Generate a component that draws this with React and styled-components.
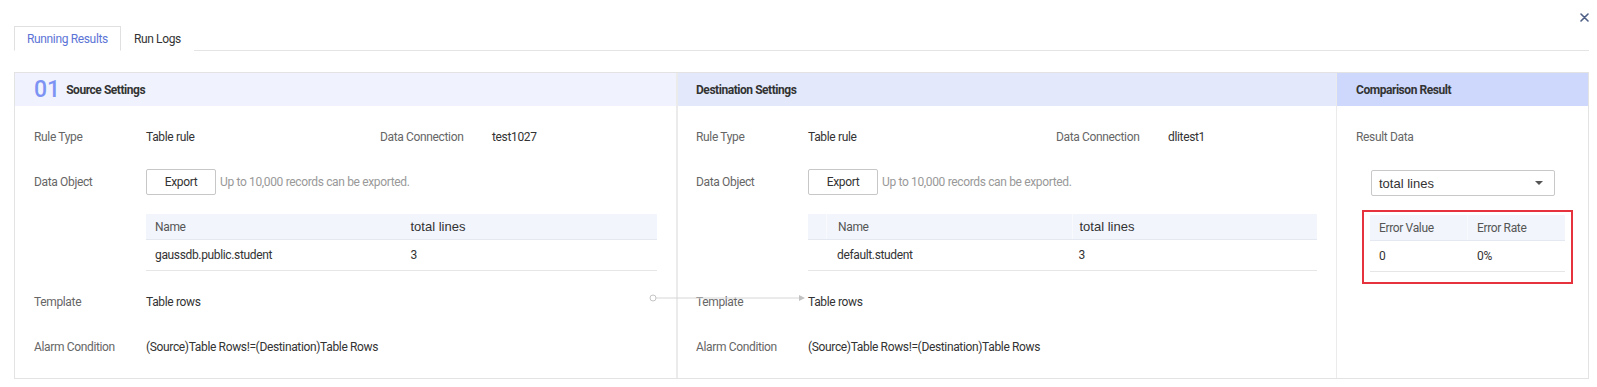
import styled, { createGlobalStyle } from 'styled-components'

const GlobalStyle = createGlobalStyle`
  body {
    margin: 0;
    background: #fff;
    font-family: Roboto, "Liberation Sans", Arial, sans-serif;
    font-size: 12px;
    letter-spacing: -0.35px;
    color: #333;
  }
  * { box-sizing: border-box; }
`

const Dialog = styled.div`
  width: 1597px;
  padding: 0 8px 0 14px;
`

const TopBar = styled.div`
  height: 26px;
  display: flex;
  justify-content: flex-end;
  padding-top: 12px;
`

const CloseButton = styled.button`
  width: 11px;
  height: 11px;
  padding: 0;
  margin-right: -1px;
  border: 0;
  background: none;
  display: flex;
  align-items: center;
  justify-content: center;
  cursor: pointer;
`

const Tabs = styled.div`
  display: flex;
  height: 25px;
  border-bottom: 1px solid #e4e4e4;
`

const Tab = styled.div`
  height: 25px;
  padding: 0 12px;
  display: flex;
  align-items: center;
  color: ${(p) => (p.$active ? '#5c74d6' : '#333')};
  border: 1px solid ${(p) => (p.$active ? '#e0e0e0' : 'transparent')};
  border-bottom-color: ${(p) => (p.$active ? '#fff' : 'transparent')};
  background: #fff;
  margin-bottom: -1px;
  cursor: pointer;
`

const Board = styled.div`
  position: relative;
  margin-top: 21px;
  border: 1px solid #e3e3e3;
  display: grid;
  grid-template-columns: 663px 659px minmax(0, 1fr);
`

const Column = styled.section`
  min-width: 0;
  border-right: ${(p) => p.$divider || 'none'};
  display: flex;
  flex-direction: column;
`

const ColumnHead = styled.header`
  height: 33px;
  display: flex;
  align-items: center;
  padding-left: ${(p) => p.$pad || 19}px;
  background: ${(p) => p.$bg};
  font-weight: bold;
  letter-spacing: -0.45px;
  color: #333;
`

const StepNo = styled.span`
  font-size: 23px;
  font-weight: 500;
  letter-spacing: 0;
  color: #7d93f4;
  margin-right: 6px;
  line-height: 1;
`

const ColumnBody = styled.div`
  padding: 17px ${(p) => p.$padRight ?? 19}px 17px ${(p) => p.$pad || 19}px;
  display: flex;
  flex-direction: column;
`

const InfoRow = styled.div`
  display: grid;
  grid-template-columns: 112px ${(p) => p.$valueWidth || 234}px 112px auto;
  align-items: center;
  height: 28px;
  margin-top: ${(p) => p.$mt || 0}px;
`

const Label = styled.span`
  color: #666;
`

const Value = styled.span`
  color: #333;
  grid-column: ${(p) => (p.$wide ? '2 / 5' : 'auto')};
`

const ExportRow = styled.div`
  display: grid;
  grid-template-columns: 112px 70px auto;
  align-items: center;
  margin-top: 18px;
  height: 26px;
`

const ExportButton = styled.button`
  width: 70px;
  height: 26px;
  border: 1px solid #c7c7c7;
  border-radius: 2px;
  background: #fff;
  font: inherit;
  letter-spacing: inherit;
  color: #333;
  padding: 0;
`

const Note = styled.span`
  margin-left: 4px;
  color: #999;
`

const Table = styled.div`
  margin-top: ${(p) => p.$mt ?? 19}px;
  margin-left: ${(p) => p.$ml ?? 112}px;
`

const HeadRow = styled.div`
  display: grid;
  grid-template-columns: ${(p) => p.$cols};
  height: 26px;
  background: #f2f5fc;
  border-bottom: 1px solid #e4e8f1;
`

const HeadCell = styled.div`
  display: flex;
  align-items: center;
  padding-left: ${(p) => p.$pad || 9}px;
  color: ${(p) => (p.$strong ? '#333' : '#555')};
  font-family: ${(p) => (p.$strong ? '"Liberation Sans", Arial, sans-serif' : 'inherit')};
  font-size: ${(p) => (p.$strong ? '13px' : '12px')};
  letter-spacing: ${(p) => (p.$strong ? '0' : 'inherit')};
  border-left: ${(p) => (p.$sep ? '1px solid #f9fafe' : 'none')};
`

const BodyRow = styled.div`
  display: grid;
  grid-template-columns: ${(p) => p.$cols};
  height: 31px;
  border-bottom: 1px solid #e6e6e6;
`

const BodyCell = styled.div`
  display: flex;
  align-items: center;
  padding-left: ${(p) => p.$pad || 9}px;
  color: #333;
`

const Select = styled.div`
  margin: 19px 0 0 15px;
  width: 184px;
  height: 26px;
  border: 1px solid #c8c8c8;
  border-radius: 2px;
  display: flex;
  align-items: center;
  justify-content: space-between;
  padding: 0 11px 0 7px;
  font-family: "Liberation Sans", Arial, sans-serif;
  font-size: 13px;
  letter-spacing: 0;
  color: #333;
`

const Caret = styled.span`
  width: 0;
  height: 0;
  border-left: 4px solid transparent;
  border-right: 4px solid transparent;
  border-top: 4px solid #555;
`

const Highlight = styled.div`
  margin: 14px 0 0 6px;
  width: 211px;
  border: 2px solid #e5323c;
  padding: 3px 6px 10px 6px;
`

const Connector = styled.svg`
  position: absolute;
  left: 633px;
  top: 220px;
  overflow: visible;
`

const sourceCols = '1fr 1fr'
const destCols = '18px 1fr 1fr'
const errCols = '97px 1fr'

export default function App() {
  return (
    <>
      <GlobalStyle />
      <Dialog>
        <TopBar>
          <CloseButton aria-label="close">
            <svg width="9" height="9" viewBox="0 0 9 9">
              <path d="M1 1L8 8M8 1L1 8" stroke="#4e5f86" strokeWidth="1.6" strokeLinecap="round" />
            </svg>
          </CloseButton>
        </TopBar>
        <Tabs>
          <Tab $active>Running Results</Tab>
          <Tab>Run Logs</Tab>
        </Tabs>

        <Board>
          <Column $divider="2px solid #ebebeb">
            <ColumnHead $bg="#f0f3fd">
              <StepNo>01</StepNo>Source Settings
            </ColumnHead>
            <ColumnBody>
              <InfoRow $valueWidth={234}>
                <Label>Rule Type</Label>
                <Value>Table rule</Value>
                <Label>Data Connection</Label>
                <Value>test1027</Value>
              </InfoRow>
              <ExportRow>
                <Label>Data Object</Label>
                <ExportButton>Export</ExportButton>
                <Note>Up to 10,000 records can be exported.</Note>
              </ExportRow>
              <Table>
                <HeadRow $cols={sourceCols}>
                  <HeadCell>Name</HeadCell>
                  <HeadCell $strong>total lines</HeadCell>
                </HeadRow>
                <BodyRow $cols={sourceCols}>
                  <BodyCell>gaussdb.public.student</BodyCell>
                  <BodyCell>3</BodyCell>
                </BodyRow>
              </Table>
              <InfoRow $mt={17}>
                <Label>Template</Label>
                <Value>Table rows</Value>
              </InfoRow>
              <InfoRow $mt={17}>
                <Label>Alarm Condition</Label>
                <Value $wide>(Source)Table Rows!=(Destination)Table Rows</Value>
              </InfoRow>
            </ColumnBody>
          </Column>

          <Column $divider="1px solid #ebebeb">
            <ColumnHead $bg="#e3e9fb" $pad={18}>Destination Settings</ColumnHead>
            <ColumnBody $pad={18}>
              <InfoRow $valueWidth={248}>
                <Label>Rule Type</Label>
                <Value>Table rule</Value>
                <Label>Data Connection</Label>
                <Value>dlitest1</Value>
              </InfoRow>
              <ExportRow>
                <Label>Data Object</Label>
                <ExportButton>Export</ExportButton>
                <Note>Up to 10,000 records can be exported.</Note>
              </ExportRow>
              <Table>
                <HeadRow $cols={destCols}>
                  <HeadCell />
                  <HeadCell $sep $pad={11}>Name</HeadCell>
                  <HeadCell $sep $strong $pad={7}>total lines</HeadCell>
                </HeadRow>
                <BodyRow $cols={destCols}>
                  <BodyCell />
                  <BodyCell $pad={11}>default.student</BodyCell>
                  <BodyCell $pad={7}>3</BodyCell>
                </BodyRow>
              </Table>
              <InfoRow $mt={17}>
                <Label>Template</Label>
                <Value>Table rows</Value>
              </InfoRow>
              <InfoRow $mt={17}>
                <Label>Alarm Condition</Label>
                <Value $wide>(Source)Table Rows!=(Destination)Table Rows</Value>
              </InfoRow>
            </ColumnBody>
          </Column>

          <Column>
            <ColumnHead $bg="#cdd8fc">Comparison Result</ColumnHead>
            <ColumnBody $pad={19} $padRight={10}>
              <InfoRow>
                <Label>Result Data</Label>
              </InfoRow>
              <Select>
                total lines
                <Caret />
              </Select>
              <Highlight>
                <Table $mt={0} $ml={0}>
                  <HeadRow $cols={errCols}>
                    <HeadCell $pad={9}>Error Value</HeadCell>
                    <HeadCell $sep $pad={9}>Error Rate</HeadCell>
                  </HeadRow>
                  <BodyRow $cols={errCols}>
                    <BodyCell $pad={9}>0</BodyCell>
                    <BodyCell $pad={10}>0%</BodyCell>
                  </BodyRow>
                </Table>
              </Highlight>
            </ColumnBody>
          </Column>

          <Connector width="160" height="10" viewBox="0 0 160 10">
            <line x1="8" y1="5" x2="151" y2="5" stroke="#d6d6d6" strokeWidth="1" />
            <circle cx="5" cy="5" r="3" fill="#fff" stroke="#c4c4c4" strokeWidth="1" />
            <path d="M151 2 L157 5 L151 8 Z" fill="#c2c2c2" />
          </Connector>
        </Board>
      </Dialog>
    </>
  )
}
